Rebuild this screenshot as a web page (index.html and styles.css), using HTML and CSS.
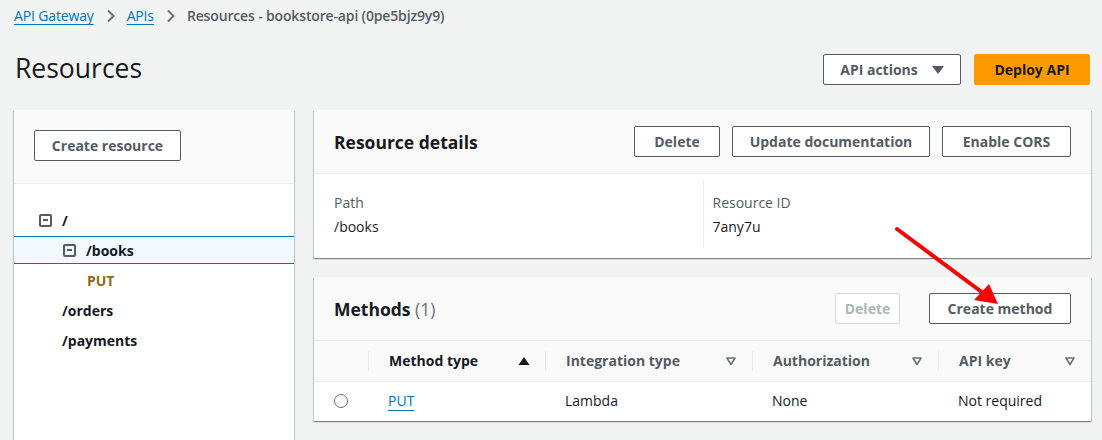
FILE: index.html
```html
<!DOCTYPE html>
<html>
<head>
<meta charset="utf-8">
<link rel="stylesheet" href="styles.css">
</head>
<body>
<nav class="crumbs">
  <a class="crumb-link">API Gateway</a>
  <svg class="chev" width="10" height="14" viewBox="0 0 10 14"><polyline points="2,1.5 7.5,7 2,12.5" fill="none" stroke="#687078" stroke-width="2"/></svg>
  <a class="crumb-link">APIs</a>
  <svg class="chev" width="10" height="14" viewBox="0 0 10 14"><polyline points="2,1.5 7.5,7 2,12.5" fill="none" stroke="#687078" stroke-width="2"/></svg>
  <span class="crumb-current">Resources - bookstore-api (0pe5bjz9y9)</span>
</nav>

<header class="page-head">
  <h1 class="title">Resources</h1>
  <div class="head-actions">
    <button class="btn btn-actions">API actions
      <svg width="12" height="10" viewBox="0 0 12 10"><polygon points="0,1 12,1 6,9" fill="#545b64"/></svg>
    </button>
    <button class="btn btn-primary">Deploy API</button>
  </div>
</header>

<main class="layout">
  <aside class="side">
    <div class="side-head">
      <button class="btn btn-create">Create resource</button>
    </div>
    <ul class="tree">
      <li class="node lvl0"><span class="minus"></span><span class="node-text">/</span></li>
      <li class="node lvl1 selected"><span class="minus"></span><span class="node-text">/books</span></li>
      <li class="node lvl2"><span class="method">PUT</span></li>
      <li class="node lvl1b"><span class="node-text">/orders</span></li>
      <li class="node lvl1b"><span class="node-text">/payments</span></li>
    </ul>
  </aside>

  <section class="content">
    <div class="card">
      <div class="card-head">
        <h2 class="card-title">Resource details</h2>
        <div class="card-actions">
          <button class="btn w-del">Delete</button>
          <button class="btn w-doc">Update documentation</button>
          <button class="btn w-cors">Enable CORS</button>
        </div>
      </div>
      <div class="details">
        <div class="detail-col">
          <div class="label">Path</div>
          <div class="value">/books</div>
        </div>
        <div class="detail-col divided">
          <div class="label">Resource ID</div>
          <div class="value">7any7u</div>
        </div>
      </div>
    </div>

    <div class="card">
      <div class="card-head">
        <h2 class="card-title">Methods <span class="count">(1)</span></h2>
        <div class="card-actions wide-gap">
          <button class="btn btn-disabled w-del2">Delete</button>
          <button class="btn w-create">Create method</button>
        </div>
      </div>
      <table class="table">
        <thead>
          <tr>
            <th class="c-radio"></th>
            <th class="c-type sorted"><span class="th-in">Method type<svg width="12" height="10" viewBox="0 0 12 10"><polygon points="6,1 11.5,9 0.5,9" fill="#16191f"/></svg></span></th>
            <th class="c-int"><span class="th-in">Integration type<svg width="12" height="10" viewBox="0 0 12 10"><polygon points="2,2 10,2 6,8.5" fill="none" stroke="#687078" stroke-width="1.6" stroke-linejoin="round"/></svg></span></th>
            <th class="c-auth"><span class="th-in">Authorization<svg width="12" height="10" viewBox="0 0 12 10"><polygon points="2,2 10,2 6,8.5" fill="none" stroke="#687078" stroke-width="1.6" stroke-linejoin="round"/></svg></span></th>
            <th class="c-key"><span class="th-in">API key<svg width="12" height="10" viewBox="0 0 12 10"><polygon points="2,2 10,2 6,8.5" fill="none" stroke="#687078" stroke-width="1.6" stroke-linejoin="round"/></svg></span></th>
          </tr>
        </thead>
        <tbody>
          <tr>
            <td class="c-radio"><span class="radio"></span></td>
            <td><a class="link">PUT</a></td>
            <td>Lambda</td>
            <td>None</td>
            <td>Not required</td>
          </tr>
        </tbody>
      </table>
    </div>
  </section>
</main>

<svg class="arrow" width="1102" height="440" viewBox="0 0 1102 440">
  <line x1="897" y1="229" x2="983" y2="293" stroke="#ff0000" stroke-width="4" stroke-linecap="round"/>
  <polygon points="998,304 974,300 989,284" fill="#ff0000"/>
</svg>
</body>
</html>
```

FILE: styles.css
```css
* { box-sizing: border-box; }
html, body { margin: 0; padding: 0; }
body {
  background: #f2f3f3;
  font-family: "Open Sans", "Noto Sans", sans-serif;
  font-size: 14px;
  color: #16191f;
  width: 1102px;
  height: 440px;
  overflow: hidden;
  position: relative;
}
.crumbs {
  display: flex;
  align-items: center;
  height: 20px;
  margin-top: 6px;
  padding-left: 14px;
  line-height: 20px;
  letter-spacing: -0.15px;
}
.crumb-link {
  color: #0073bb;
  text-decoration: underline;
  text-underline-offset: 3px;
  text-decoration-thickness: 1px;
}
.chev { margin: 0 11px 0 12px; }
.crumb-current { color: #545b64; font-weight: 600; }

.page-head {
  display: flex;
  justify-content: space-between;
  align-items: center;
  padding: 0 12px 0 15px;
  margin-top: 28px;
  height: 31px;
}
.title {
  margin: 0;
  font-size: 26.5px;
  font-weight: 400;
  line-height: 30px;
  position: relative;
  top: -2px;
}
.head-actions { display: flex; gap: 13px; }

.btn {
  font-family: inherit;
  font-size: 14px;
  font-weight: 700;
  color: #545b64;
  background: #fff;
  border: 1px solid #545b64;
  border-radius: 2px;
  height: 31px;
  padding: 0;
  display: inline-flex;
  align-items: center;
  justify-content: center;
  white-space: nowrap;
  cursor: pointer;
}
.btn-actions { width: 138px; gap: 14px; }
.btn-primary {
  width: 116px;
  background: #ff9900;
  border-color: #ff9900;
  color: #16191f;
}
.btn-disabled { border-color: #d5dbdb; color: #aab7b8; }
.w-del { width: 86px; }
.w-doc { width: 198px; }
.w-cors { width: 129px; }
.w-del2 { width: 65px; }
.w-create { width: 142px; }

.layout {
  display: flex;
  gap: 20px;
  padding: 0 11px 0 14px;
  margin-top: 25px;
}
.side {
  width: 280px;
  flex: none;
  background: #fff;
  height: 330px;
  box-shadow: 0 1px 1px 0 rgba(0,28,36,.3), 1px 1px 1px 0 rgba(0,28,36,.15), -1px 1px 1px 0 rgba(0,28,36,.15);
}
.side-head {
  background: #fafafa;
  height: 74px;
  padding: 20px 20px 0;
  border-bottom: 1px solid #eaeded;
}
.btn-create { width: 147px; }
.tree {
  list-style: none;
  margin: 0;
  padding: 21px 0 0;
}
.node {
  height: 30px;
  display: flex;
  align-items: center;
  font-weight: 700;
}
.node.lvl0 { padding-left: 25px; }
.node.lvl1 { padding-left: 49px; }
.node.lvl2 { padding-left: 73px; }
.node.lvl1b { padding-left: 48px; }
.node.selected {
  background: #f1faff;
  border-top: 1px solid #0073bb;
  border-bottom: 1px solid #0073bb;
  height: 28px;
  margin: 1px 0;
}
.minus {
  width: 13px;
  height: 13px;
  border: 2px solid #545b64;
  border-radius: 2px;
  position: relative;
  margin-right: 10px;
  flex: none;
}
.minus::after {
  content: "";
  position: absolute;
  left: 2px;
  right: 2px;
  top: 3.5px;
  height: 2px;
  background: #545b64;
}
.method { color: #8c6c14; font-weight: 700; }

.content {
  flex: 1;
  display: flex;
  flex-direction: column;
  gap: 19px;
}
.card {
  background: #fff;
  box-shadow: 0 1px 1px 0 rgba(0,28,36,.3), 1px 1px 1px 0 rgba(0,28,36,.15), -1px 1px 1px 0 rgba(0,28,36,.15);
}
.card-head {
  background: #fafafa;
  height: 64px;
  padding: 0 20px;
  display: flex;
  align-items: center;
  justify-content: space-between;
  border-bottom: 1px solid #eaeded;
}
.card-title {
  margin: 0;
  font-size: 17.5px;
  font-weight: 700;
  line-height: 22px;
}
.count { color: #687078; font-weight: 400; }
.card-actions { display: flex; gap: 12px; }
.card-actions.wide-gap { gap: 29px; }

.details {
  display: grid;
  grid-template-columns: 1fr 1fr;
  padding: 6px 20px 10px;
}
.detail-col { padding: 13px 0 11px; }
.detail-col.divided { border-left: 1px solid #eaeded; padding-left: 9px; }
.label { color: #545b64; line-height: 20px; }
.value { line-height: 20px; margin-top: 4px; }

.table {
  width: 100%;
  border-collapse: collapse;
  table-layout: fixed;
}
.table th {
  background: #fafafa;
  height: 40px;
  text-align: left;
  font-weight: 700;
  color: #545b64;
  padding: 0;
  border-bottom: 1px solid #eaeded;
}
.th-in {
  display: flex;
  align-items: center;
  justify-content: space-between;
  padding: 0 15px 0 20px;
  border-left: 1px solid #eaeded;
  height: 20px;
  line-height: 20px;
}
.table th.sorted { color: #16191f; }
.c-radio { width: 54px; }
.c-type { width: 177px; }
.c-int { width: 207px; }
.c-auth { width: 186px; }
.table td {
  height: 40px;
  padding: 0 0 0 20px;
  line-height: 20px;
}
.table td.c-radio { padding-left: 20px; }
.radio {
  display: block;
  width: 14px;
  height: 14px;
  border: 1.5px solid #687078;
  border-radius: 50%;
}
.link {
  color: #0073bb;
  text-decoration: underline;
  text-underline-offset: 4px;
}

.arrow {
  position: absolute;
  left: 0;
  top: 0;
  pointer-events: none;
}
```
